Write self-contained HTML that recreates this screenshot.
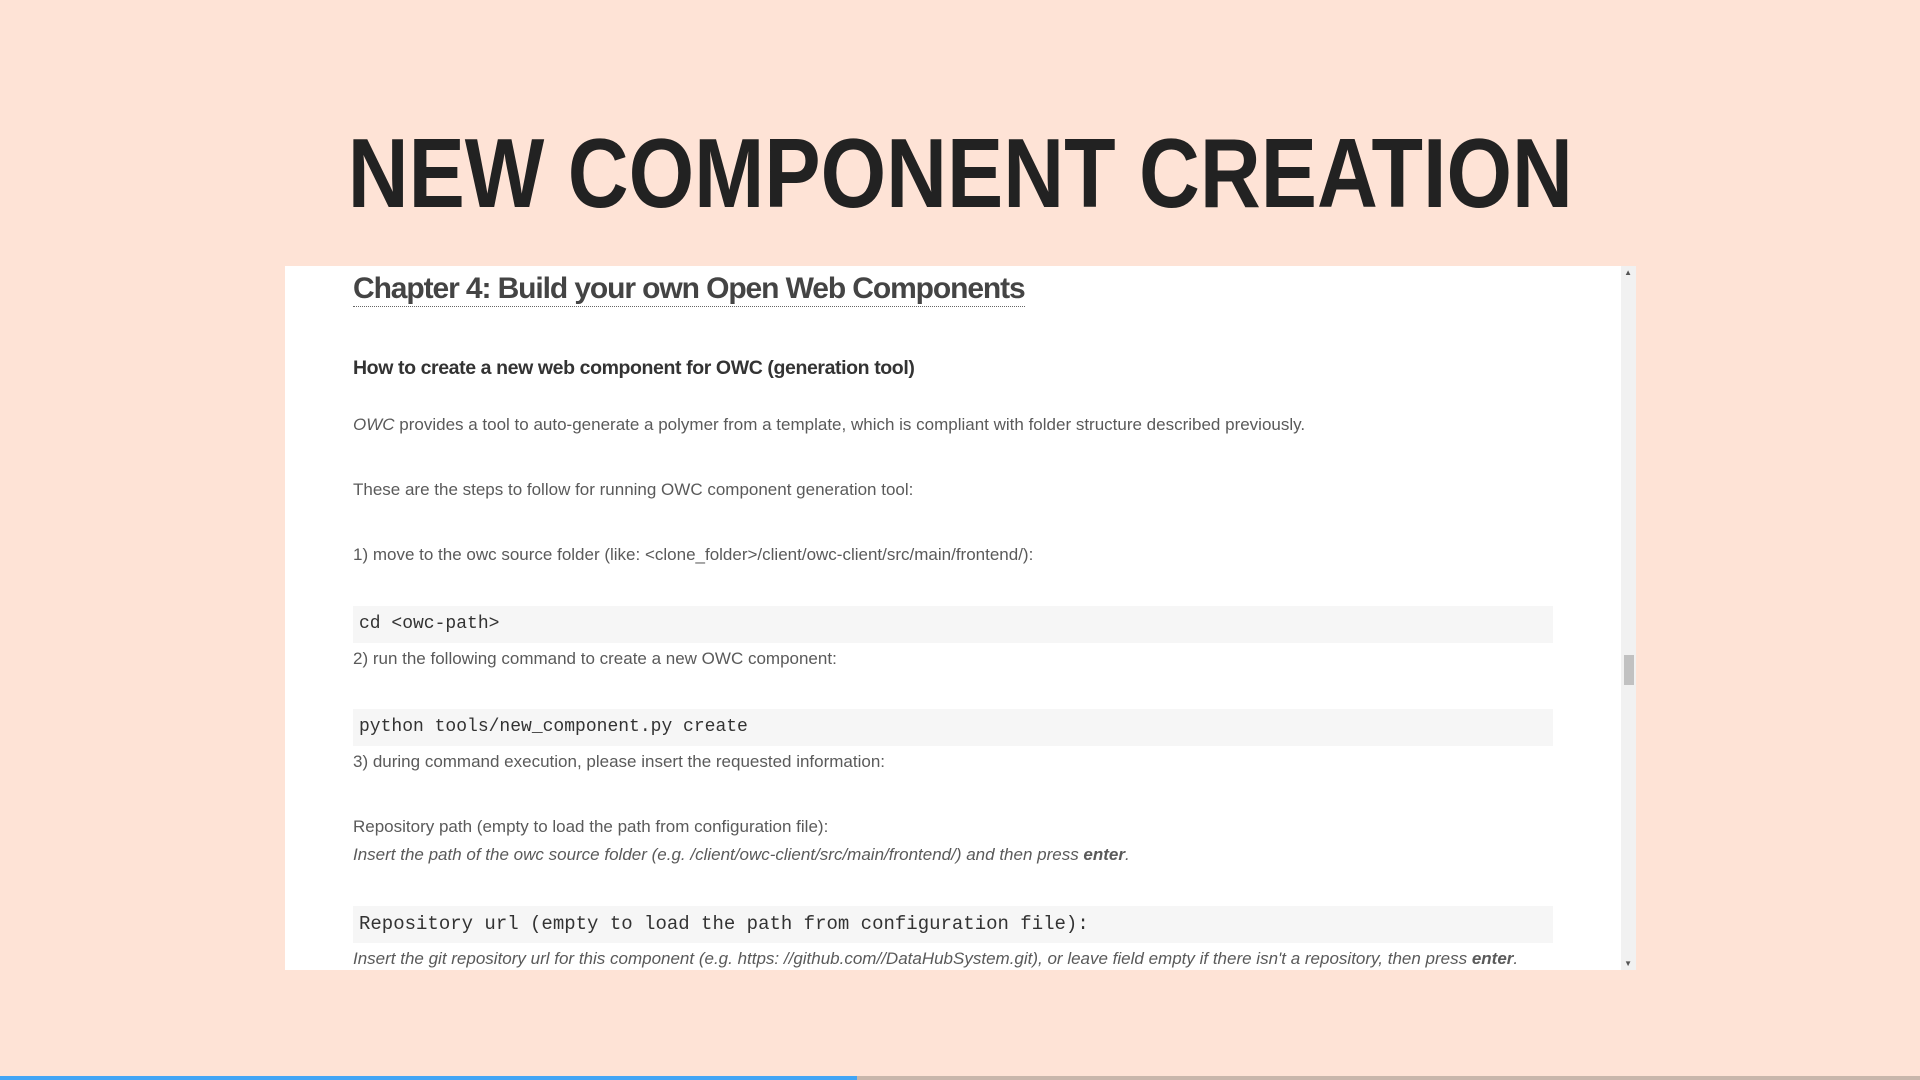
<!DOCTYPE html>
<html><head><meta charset="utf-8"><style>
html,body{margin:0;padding:0;width:1920px;height:1080px;overflow:hidden;background:#fee3d6;font-family:"Liberation Sans",sans-serif;}
.title{position:absolute;left:0;width:1920px;top:118px;text-align:center;}
.title span{display:inline-block;font-size:98px;font-weight:bold;color:#222;transform:scaleX(0.86);transform-origin:center;white-space:nowrap;line-height:110px;}
.panel{position:absolute;left:285px;top:266px;width:1351px;height:704px;background:#fff;overflow:hidden;}
.sb{position:absolute;right:0;top:0;width:15px;height:704px;background:#f1f1f1;}
.thumb{position:absolute;left:3px;top:389px;width:10px;height:30px;background:#c1c1c1;}
.t{position:absolute;left:68px;white-space:nowrap;color:#5a5a5a;font-size:17px;}
.it{font-style:italic;}
.h2{font-size:30px;font-weight:bold;color:#444;border-bottom:1px dotted #666;letter-spacing:-1.1px;}
.h3{font-size:19.5px;font-weight:bold;color:#333;letter-spacing:-0.4px;}
.code{position:absolute;left:68px;width:1200px;height:37px;background:#f6f6f6;font-family:"Liberation Mono",monospace;color:#333;font-size:18px;line-height:37px;padding-left:6px;box-sizing:border-box;}
.arr{position:absolute;right:4px;font-size:8px;color:#555;}
.bar{position:absolute;left:0;top:1076px;height:4px;width:1920px;background:#c8b6ab;}
.bar div{width:857px;height:4px;background:#42a5f5;}
</style></head><body>
<div class="title"><span>NEW COMPONENT CREATION</span></div>
<div class="panel">
<div class="t h2" style="top:6px;">Chapter 4: Build your own Open Web Components</div>
<div class="t h3" style="top:91px;">How to create a new web component for OWC (generation tool)</div>
<div class="t" style="top:149px;"><span class="it">OWC</span> provides a tool to auto-generate a polymer from a template, which is compliant with folder structure described previously.</div>
<div class="t" style="top:214px;">These are the steps to follow for running OWC component generation tool:</div>
<div class="t" style="top:279px;">1) move to the owc source folder (like: &lt;clone_folder&gt;/client/owc-client/src/main/frontend/):</div>
<div class="code" style="top:340px;">cd &lt;owc-path&gt;</div>
<div class="t" style="top:383px;">2) run the following command to create a new OWC component:</div>
<div class="code" style="top:443px;">python tools/new_component.py create</div>
<div class="t" style="top:486px;">3) during command execution, please insert the requested information:</div>
<div class="t" style="top:551px;">Repository path (empty to load the path from configuration file):</div>
<div class="t it" style="top:579px;">Insert the path of the owc source folder (e.g. /client/owc-client/src/main/frontend/) and then press <b>enter</b>.</div>
<div class="code" style="top:640px;font-size:19px;">Repository url (empty to load the path from configuration file):</div>
<div class="t it" style="top:683px;">Insert the git repository url for this component (e.g. https: //github.com//DataHubSystem.git), or leave field empty if there isn't a repository, then press <b>enter</b>.</div>
<div class="sb"><div class="arr" style="top:2px;">▲</div><div class="thumb"></div><div class="arr" style="bottom:2px;">▼</div></div>
</div>
<div class="bar"><div></div></div>
</body></html>
